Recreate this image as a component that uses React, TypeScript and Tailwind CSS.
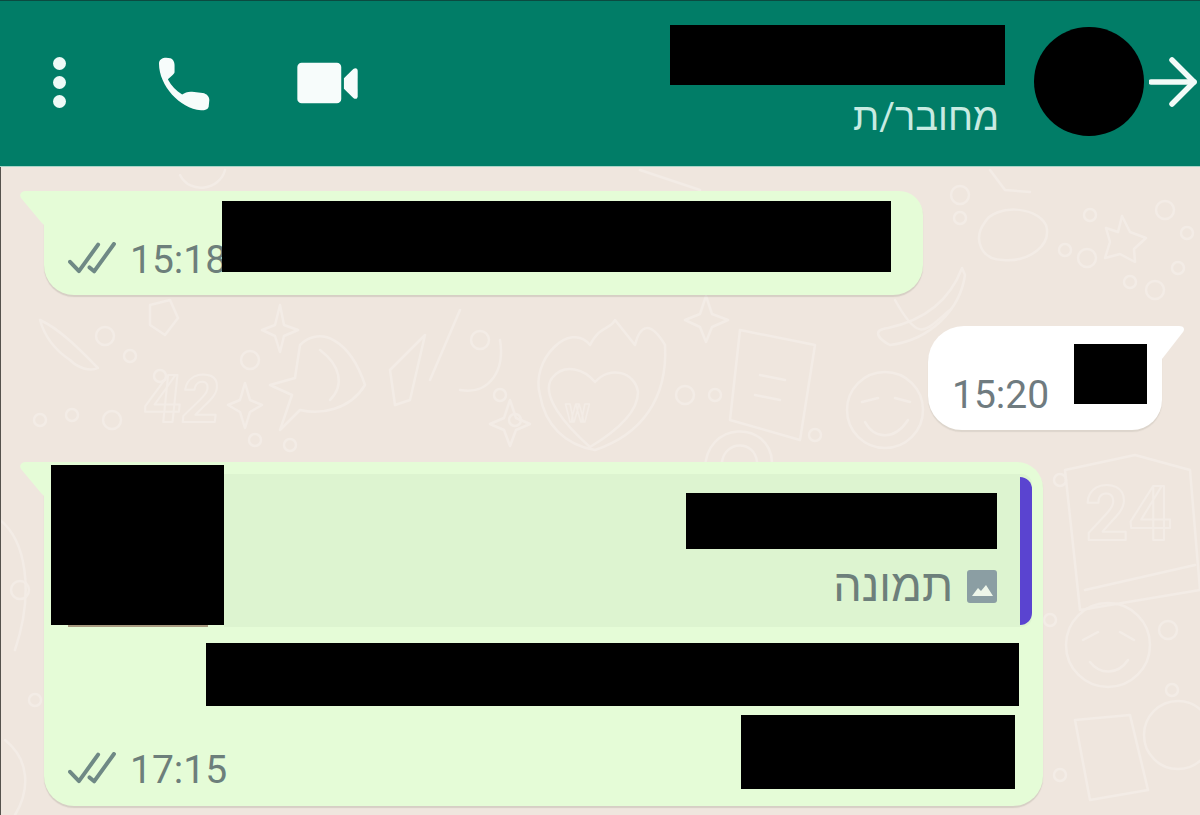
import React from "react"

const font = { fontFamily: "Roboto, 'Noto Sans', 'Liberation Sans', sans-serif" }

function Redacted({ className }: { className: string }) {
    return <div className={`bg-black shrink-0 ${className}`} />
}

function DoubleCheck({ className }: { className?: string }) {
    return (
        <svg viewBox="205 725 145 100" className={`w-[48px] h-[33px] shrink-0 ${className ?? ""}`} fill="none" stroke="#6f8985" strokeWidth="12" strokeLinecap="round" strokeLinejoin="round">
            <path d="M211 785 L238 813 L296 733" />
            <path d="M270 802 L284 814 L344 731" />
        </svg>
    )
}

function Tail({ side }: { side: "left" | "right" }) {
    if (side === "left") {
        return (
            <svg viewBox="0 0 26 40" className="absolute left-[-24px] top-0 w-[26px] h-[40px]">
                <path d="M6 0 H26 V36 L21 31 L1 7 C-1 3 1 0 6 0Z" fill="#e5fcd7" />
            </svg>
        )
    }
    return (
        <svg viewBox="0 0 26 40" className="absolute right-[-23px] top-0 w-[26px] h-[40px]">
            <path d="M20 0 H0 V36 L3 33 L24 6 C26 3 25 0 20 0Z" fill="#ffffff" />
        </svg>
    )
}

// faint doodles of the chat wallpaper
function Wallpaper() {
    const rings = [
        [105, 336], [130, 356], [160, 376], [112, 420], [72, 415], [40, 420], [250, 360], [255, 440], [290, 445], [480, 340], [500, 395], [515, 420],
        [685, 395], [715, 395], [830, 230], [960, 195], [960, 218], [1090, 215], [1165, 210], [1187, 233], [1065, 250], [1087, 258], [1178, 268], [1130, 282], [1155, 290],
        [815, 435], [1050, 620], [1168, 630], [1172, 690], [1060, 480], [20, 590], [1060, 775], [35, 700],
    ]
    return (
        <svg className="absolute inset-0 w-[1200px] h-[815px] blur-[0.7px]" viewBox="0 0 1200 815" fill="none" stroke="#f3ece6" strokeWidth="2.5" strokeLinecap="round" strokeLinejoin="round">
            {rings.map(([cx, cy], i) => (
                <circle key={i} cx={cx} cy={cy} r={i % 3 === 0 ? 9 : 6} />
            ))}
            {/* cloud, star, banana */}
            <path d="M985 222 C995 205 1035 205 1046 225 C1052 245 1030 262 1003 260 C982 260 972 240 985 222Z" />
            <path d="M1122 216 L1130 232 L1146 238 L1134 249 L1135 262 L1120 254 L1105 258 L1110 242 L1106 228 L1118 232Z" />
            <path d="M965 275 C960 310 930 340 890 345 C880 340 870 330 888 328 C925 320 950 300 962 268Z" />
            <path d="M990 170 L1005 190 L1030 192 M180 175 C190 195 220 190 225 170 M640 170 L700 190" />
            {/* left side: banana, stars, bolt, leaf */}
            <path d="M40 320 C62 330 85 355 98 368 C90 372 78 368 70 360 C55 350 45 338 40 320Z" />
            <path d="M150 305 L170 300 L178 318 L165 335 L150 325Z M280 305 L284 325 L298 330 L284 336 L280 352 L275 336 L262 330 L275 325Z" />
            <path d="M245 383 L250 400 L262 405 L250 412 L245 428 L240 412 L228 405 L240 400Z" />
            <path d="M300 345 C320 325 350 340 365 385 C350 410 320 415 300 410 L280 430 L292 395 L270 385 L295 378Z M320 350 C340 365 345 385 330 400" />
            <path d="M390 370 L425 335 L410 400 L395 405Z M460 310 L430 380 M500 340 C505 370 490 395 460 390" />
            {/* flame with heart */}
            <path d="M540 395 C530 360 570 320 590 345 C600 325 610 330 615 320 L635 345 C640 325 650 320 665 345 C668 400 640 435 595 450 C565 445 545 425 540 395Z" />
            <path d="M590 447 C565 425 540 395 552 378 C565 362 585 370 595 382 C610 365 635 372 638 392 C638 415 610 435 590 447Z" />
            <text x="565" y="422" fontSize="34" fontFamily="Roboto, sans-serif" fontWeight="700" strokeWidth="1.5">w</text>
            <path d="M706 296 L712 314 L728 320 L712 327 L706 342 L700 327 L685 320 L700 314Z M510 400 L516 418 L530 424 L516 430 L510 446 L504 430 L490 424 L504 418Z" />
            {/* notebook and smiling face */}
            <path d="M740 330 L815 345 L800 440 L730 420Z M760 375 L785 380 M755 395 L780 400" />
            <circle cx="885" cy="410" r="38" />
            <path d="M862 402 L878 398 M895 398 L910 402 M865 422 C875 440 895 440 908 420" />
            <path d="M895 300 C920 345 925 330 950 310" />
            {/* clock arch */}
            <path d="M705 470 C705 420 770 420 772 462 M722 462 C725 440 755 440 757 462" />
            {/* 42 and 24 */}
            <text x="142" y="422" fontSize="66" fontFamily="Roboto, sans-serif" fontWeight="700" strokeWidth="2" transform="skewX(-6) translate(44 0)">42</text>
            <path d="M1065 470 L1135 455 L1190 470 L1200 590 L1080 610 Z M1085 590 L1195 565" />
            <text x="1085" y="540" fontSize="76" fontFamily="Roboto, sans-serif" fontWeight="700" strokeWidth="2">24</text>
            {/* lower right faces */}
            <circle cx="1108" cy="645" r="42" />
            <path d="M1083 640 L1098 632 M1120 632 L1134 640 M1090 662 C1100 675 1118 675 1128 660" />
            <circle cx="1178" cy="735" r="34" />
            <path d="M1075 720 L1130 715 L1148 790 L1090 800Z" />
            <path d="M0 520 C25 540 35 590 15 650 M5 740 C30 760 30 790 15 815" />
        </svg>
    )
}

export default function App() {
    return (
        <div dir="ltr" style={font} className="relative w-[1200px] h-[815px] overflow-hidden bg-[#efe6de]">
            <Wallpaper />

            {/* window edge of the photo */}
            <div className="absolute left-0 top-0 w-px h-full bg-[#55524d]" />

            <div className="relative flex flex-col h-full">
                <header className="h-[167px] shrink-0 flex bg-[#017d67] border-t border-t-[#0b4a40] border-b border-b-[#a9d5c8] pl-[53px] pr-[3px]">
                    <div className="flex items-center pb-[3px]">
                        <div className="flex flex-col gap-[6px]">
                            <div className="w-[13px] h-[13px] rounded-full bg-[#eefaf7]" />
                            <div className="w-[13px] h-[13px] rounded-full bg-[#eefaf7]" />
                            <div className="w-[13px] h-[13px] rounded-full bg-[#eefaf7]" />
                        </div>
                        <svg viewBox="475 170 157 163" className="w-[52px] h-[54px] ml-[92px] mt-[3px]" fill="#f7fcfb">
                            <path d="M478 190 C478 178 488 172 500 172 L512 174 C520 176 525 185 525 195 L525 215 C525 222 510 230 505 238 C515 258 530 272 548 283 C556 278 565 274 578 275 L610 279 C622 281 630 290 630 300 L628 320 C626 328 618 331 605 331 C540 325 478 255 478 190Z" />
                        </svg>
                        <svg viewBox="890 188 182 125" className="w-[61px] h-[42px] ml-[87px] mt-[1px]" fill="#f7fcfb">
                            <rect x="891" y="190" width="131" height="121" rx="13" />
                            <path d="M1030 236 L1058 209 C1064 204 1071 206 1071 214 V290 C1071 298 1064 300 1058 295 L1030 268Z" />
                        </svg>
                    </div>

                    <div className="ml-auto flex flex-col items-end pt-[24px]">
                        <Redacted className="w-[335px] h-[60px]" />
                        <span dir="rtl" className="mr-[6px] mt-[8px] text-[38px] leading-[48px] text-[#c8ebe2]">מחובר/ת</span>
                    </div>
                    <div className="ml-[29px] mt-[26px] w-[110px] h-[109px] rounded-full bg-black shrink-0" />
                    <svg viewBox="0 0 48 50" className="ml-[5px] mt-[56px] w-[48px] h-[50px] shrink-0" fill="none" stroke="#f2fbf8" strokeWidth="5.5" strokeLinecap="round" strokeLinejoin="round">
                        <path d="M2 25 H45" />
                        <path d="M23 3 L45 25 L23 47" />
                    </svg>
                </header>

                <main className="flex flex-col items-start pl-[44px] pt-[24px]">
                    {/* first sent message */}
                    <div className="relative w-[879px] h-[104px] flex items-start pl-[24px] pt-[10px] bg-[#e5fcd7] rounded-[0_24px_30px_30px] shadow-[0_2px_1px_rgba(90,90,70,0.16)]">
                        <Tail side="left" />
                        <DoubleCheck className="mt-[41px]" />
                        <span className="ml-[14px] mt-[40px] text-[39px] leading-none text-[#6d7f7b]">15:18</span>
                        <Redacted className="ml-[-5px] w-[669px] h-[71px]" />
                    </div>

                    {/* received */}
                    <div className="relative ml-[884px] mt-[31px] w-[234px] h-[104px] flex items-start pl-[24px] pr-[15px] pt-[18px] bg-white rounded-[36px_0_30px_34px] shadow-[0_2px_1px_rgba(90,90,70,0.12)]">
                        <Tail side="right" />
                        <span className="mt-[32px] text-[39px] leading-none text-[#6f7b7f]">15:20</span>
                        <Redacted className="ml-auto w-[73px] h-[60px]" />
                    </div>

                    {/* reply with quoted photo */}
                    <div className="relative mt-[32px] w-[999px] h-[344px] pt-[3px] bg-[#e5fcd7] rounded-[0_26px_30px_30px] shadow-[0_2px_1px_rgba(90,90,70,0.16)]">
                        <Tail side="left" />
                        <div className="flex pl-[7px] pr-[11px] h-[162px]">
                            <div className="shrink-0">
                                <Redacted className="w-[173px] h-[160px]" />
                                <div className="ml-[17px] w-[140px] h-[2px] bg-[#a89a80]" />
                            </div>
                            <div className="flex-1 mt-[9px] h-[153px] flex items-center bg-[#ddf4d0] rounded-r-[10px]">
                                <div className="flex-1 h-full flex flex-col items-end pt-[19px] pr-[22px]">
                                    <Redacted className="mr-px w-[311px] h-[56px]" />
                                    <div className="flex items-center mt-[20px] mr-px">
                                        <span dir="rtl" className="text-[45px] leading-[34px] text-[#6d7f7b]">תמונה</span>
                                        <svg viewBox="0 0 30 33" className="ml-[14px] w-[30px] h-[33px]">
                                            <rect width="30" height="33" rx="3" fill="#8b9ea3" />
                                            <path d="M5 26 L11 18 L14 21 L19 15 L26 26Z" fill="#eef6ea" />
                                        </svg>
                                    </div>
                                </div>
                                <div className="w-[12px] h-[148px] shrink-0 bg-[#5a44d0] rounded-r-[12px]" />
                            </div>
                        </div>
                        <div className="flex justify-end mt-[16px] pr-[24px]">
                            <Redacted className="w-[813px] h-[63px]" />
                        </div>
                        <div className="flex items-start mt-[9px] pl-[24px] pr-[28px]">
                            <DoubleCheck className="mt-[37px]" />
                            <span className="ml-[14px] mt-[36px] text-[39px] leading-none text-[#6d7f7b]">17:15</span>
                            <Redacted className="ml-auto w-[274px] h-[74px]" />
                        </div>
                    </div>
                </main>
            </div>
        </div>
    )
}
